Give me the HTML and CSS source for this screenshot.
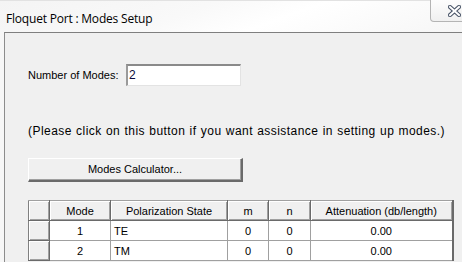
FILE: index.html
```html
<!DOCTYPE html>
<html lang="en">
<head>
    <meta charset="UTF-8">
    <title>Floquet Port : Modes Setup</title>
    <link rel="stylesheet" href="styles.css">
</head>
<body>
    <div class="window">
        <div class="titlebar">
            <span class="title">Floquet Port : Modes Setup</span>
            <div class="close-btn">
                <svg width="13" height="12" viewBox="0 0 13 12">
                    <path d="M2 2 L11 10 M11 2 L2 10" stroke="#4a5568" stroke-width="4.2" stroke-linecap="square"/>
                    <path d="M2 2 L11 10 M11 2 L2 10" stroke="#ffffff" stroke-width="2" stroke-linecap="square"/>
                </svg>
            </div>
        </div>
        <div class="panel">
            <div class="num-row">
                <label class="label">Number of Modes:</label>
                <div class="num-input">2</div>
            </div>
            <p class="note">(Please click on this button if you want assistance in setting up modes.)</p>
            <div class="calc-btn">Modes Calculator...</div>
            <table class="grid">
                <tr>
                    <th class="corner"></th>
                    <th class="c-mode">Mode</th>
                    <th class="c-pol">Polarization State</th>
                    <th class="c-m">m</th>
                    <th class="c-n">n</th>
                    <th class="c-att">Attenuation (db/length)</th>
                </tr>
                <tr>
                    <td class="rowhead"></td>
                    <td class="center">1</td>
                    <td>TE</td>
                    <td class="center">0</td>
                    <td class="center">0</td>
                    <td class="center">0.00</td>
                </tr>
                <tr>
                    <td class="rowhead"></td>
                    <td class="center">2</td>
                    <td>TM</td>
                    <td class="center">0</td>
                    <td class="center">0</td>
                    <td class="center">0.00</td>
                </tr>
            </table>
        </div>
    </div>
</body>
</html>
```

FILE: styles.css
```css
body {
    margin: 0;
    padding: 0;
    width: 462px;
    height: 262px;
    overflow: hidden;
    background: #f7f7f7;
    font-family: "Liberation Sans", Arial, sans-serif;
    font-size: 11px;
    color: #000;
}

.window {
    display: flex;
    flex-direction: column;
    height: 262px;
}

.titlebar {
    height: 32px;
    display: flex;
    justify-content: space-between;
    align-items: flex-start;
    border-top: 1px solid #e2e2e2;
    box-sizing: border-box;
    background: linear-gradient(160deg, #f4f4f4 0%, #f9f9f9 40%, #ffffff 60%, #f6f6f6 100%);
}

.title {
    font-family: "Open Sans", "Noto Sans", sans-serif;
    font-size: 12px;
    margin: 9px 0 0 6px;
    letter-spacing: -0.2px;
}

.close-btn {
    width: 44px;
    height: 22px;
    margin-top: -1px;
    margin-right: -12px;
    box-sizing: border-box;
    border: 1px solid #b4b4b4;
    border-top: none;
    border-radius: 0 0 0 4px;
    background: linear-gradient(#fdfdfd, #f0f0f0);
    display: flex;
    align-items: center;
    padding-left: 17px;
}

.close-btn svg {
    display: block;
}

.panel {
    flex: 1;
    margin-left: 4px;
    border-top: 1px solid #7f7f7f;
    border-left: 1px solid #8c8c8c;
    background: #f0f0f0;
    padding: 31px 0 0 23px;
}

.num-row {
    display: flex;
    align-items: center;
}

.label {
    width: 98px;
}

.num-input {
    width: 115px;
    height: 22px;
    box-sizing: border-box;
    background: #fff;
    border-top: 2px solid #8a8a8a;
    border-left: 2px solid #9a9a9a;
    border-right: 1px solid #e3e3e3;
    border-bottom: 1px solid #e3e3e3;
    padding: 2px 0 0 1px;
    font-size: 12px;
    color: #0a0a3a;
}

.note {
    margin: 37px 0 0 0;
    font-size: 12px;
    line-height: 16px;
    letter-spacing: 0.45px;
    word-spacing: 0.5px;
}

.calc-btn {
    width: 215px;
    height: 24px;
    margin-top: 19px;
    box-sizing: border-box;
    border-top: 1px solid #fff;
    border-left: 1px solid #fff;
    border-right: 2px solid #6a6a6a;
    border-bottom: 2px solid #6a6a6a;
    box-shadow: inset -1px -1px 0 #a0a0a0;
    display: flex;
    align-items: center;
    justify-content: center;
    padding-bottom: 1px;
}

.grid {
    margin-top: 18px;
    border-collapse: collapse;
    table-layout: fixed;
    width: 424px;
    border-top: 1px solid #a0a0a0;
    border-left: 1px solid #808080;
    border-right: 2px solid #6a6a6a;
}

.grid th,
.grid td {
    height: 20px;
    padding: 0 0 0 3px;
    box-sizing: border-box;
    font-weight: normal;
    white-space: nowrap;
}

.grid th {
    background: #f0f0f0;
    border-right: 1px solid #6a6a6a;
    border-bottom: 1px solid #6a6a6a;
    box-shadow: inset 1px 1px 0 #fff, inset -1px -1px 0 #a0a0a0;
    text-align: center;
    padding: 0;
}

.grid td {
    background: #fff;
    border-right: 1px solid #a0a0a0;
    border-bottom: 1px solid #a0a0a0;
}

.grid td.rowhead {
    background: #f0f0f0;
    border-right: 1px solid #6a6a6a;
    border-bottom: 1px solid #6a6a6a;
    box-shadow: inset 1px 1px 0 #fff, inset -1px -1px 0 #a0a0a0;
}

.grid td.center {
    text-align: center;
    padding: 0;
}

.corner { width: 21px; }
.c-mode { width: 61px; }
.c-pol { width: 117px; }
.c-m { width: 41px; }
.c-n { width: 42px; }
.c-att { width: 142px; }
```
